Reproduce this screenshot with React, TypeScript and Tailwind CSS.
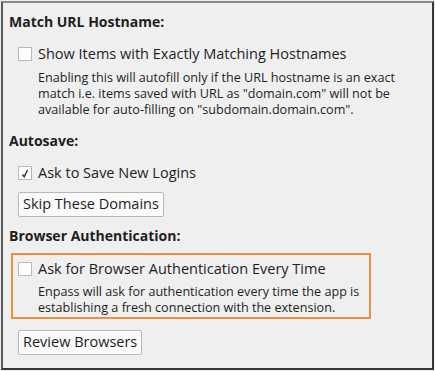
import React from 'react';

const Checkbox: React.FC<{ checked?: boolean }> = ({ checked }) => (
  <span className="flex h-[14px] w-[14px] shrink-0 items-center justify-center border border-[#b8b8b8] bg-white">
    {checked && (
      <svg width="8" height="9" viewBox="0 0 8 9" fill="none" stroke="#2e2e2e" strokeWidth="1.4">
        <path d="M1.5 5.5 L3.2 7.8 L6.5 1" />
      </svg>
    )}
  </span>
);

const Button: React.FC<{ label: string }> = ({ label }) => (
  <button className="h-[25px] self-start rounded-[2px] border border-[#b8b8b8] bg-[#fafafa] px-[4px] text-[14.5px] leading-none text-[#1e1e1e]">
    {label}
  </button>
);

const App: React.FC = () => {
  return (
    <div
      className="h-[371px] w-[435px] bg-[#efefef] p-px"
      style={{ fontFamily: '"Open Sans", sans-serif' }}
    >
      <div className="flex h-[369px] flex-col border-2 border-t-[#8a8a8a] border-l-[#5a5a5a] border-r-[#3a3530] border-b-[#3a3530] px-[6px] text-[#1e1e1e]">
        <h2 className="mt-[9px] text-[14px] font-bold leading-[20px]">Match URL Hostname:</h2>

        <div className="mt-[12px] flex items-center gap-[6px] pl-[9px]">
          <Checkbox />
          <span className="text-[14.5px] leading-[20px]">Show Items with Exactly Matching Hostnames</span>
        </div>
        <p className="mt-[6px] pl-[29px] text-[12.6px] leading-[16px]">
          Enabling this will autofill only if the URL hostname is an exact match i.e. items saved with URL as "domain.com" will not be available for auto-filling on "subdomain.domain.com".
        </p>

        <h2 className="mt-[13px] text-[14px] font-bold leading-[20px]">Autosave:</h2>

        <div className="mt-[12px] flex items-center gap-[6px] pl-[9px]">
          <Checkbox checked />
          <span className="text-[14.5px] leading-[20px]">Ask to Save New Logins</span>
        </div>
        <div className="mt-[9px] flex pl-[9px]">
          <Button label="Skip These Domains" />
        </div>

        <h2 className="mt-[9px] text-[14px] font-bold leading-[20px]">Browser Authentication:</h2>

        <div className="mt-[7px] mr-[55px] ml-[2px] border-2 border-[#e8923c] pb-[1px]">
          <div className="mt-[4px] flex items-center gap-[6px] pl-[5px]">
            <Checkbox />
            <span className="text-[14.5px] leading-[20px]">Ask for Browser Authentication Every Time</span>
          </div>
          <p className="mt-[5px] pl-[25px] text-[12.6px] leading-[16px]">
            Enpass will ask for authentication every time the app is establishing a fresh connection with the extension.
          </p>
        </div>

        <div className="mt-[11px] flex pl-[9px]">
          <Button label="Review Browsers" />
        </div>
      </div>
    </div>
  );
};

export default App;
